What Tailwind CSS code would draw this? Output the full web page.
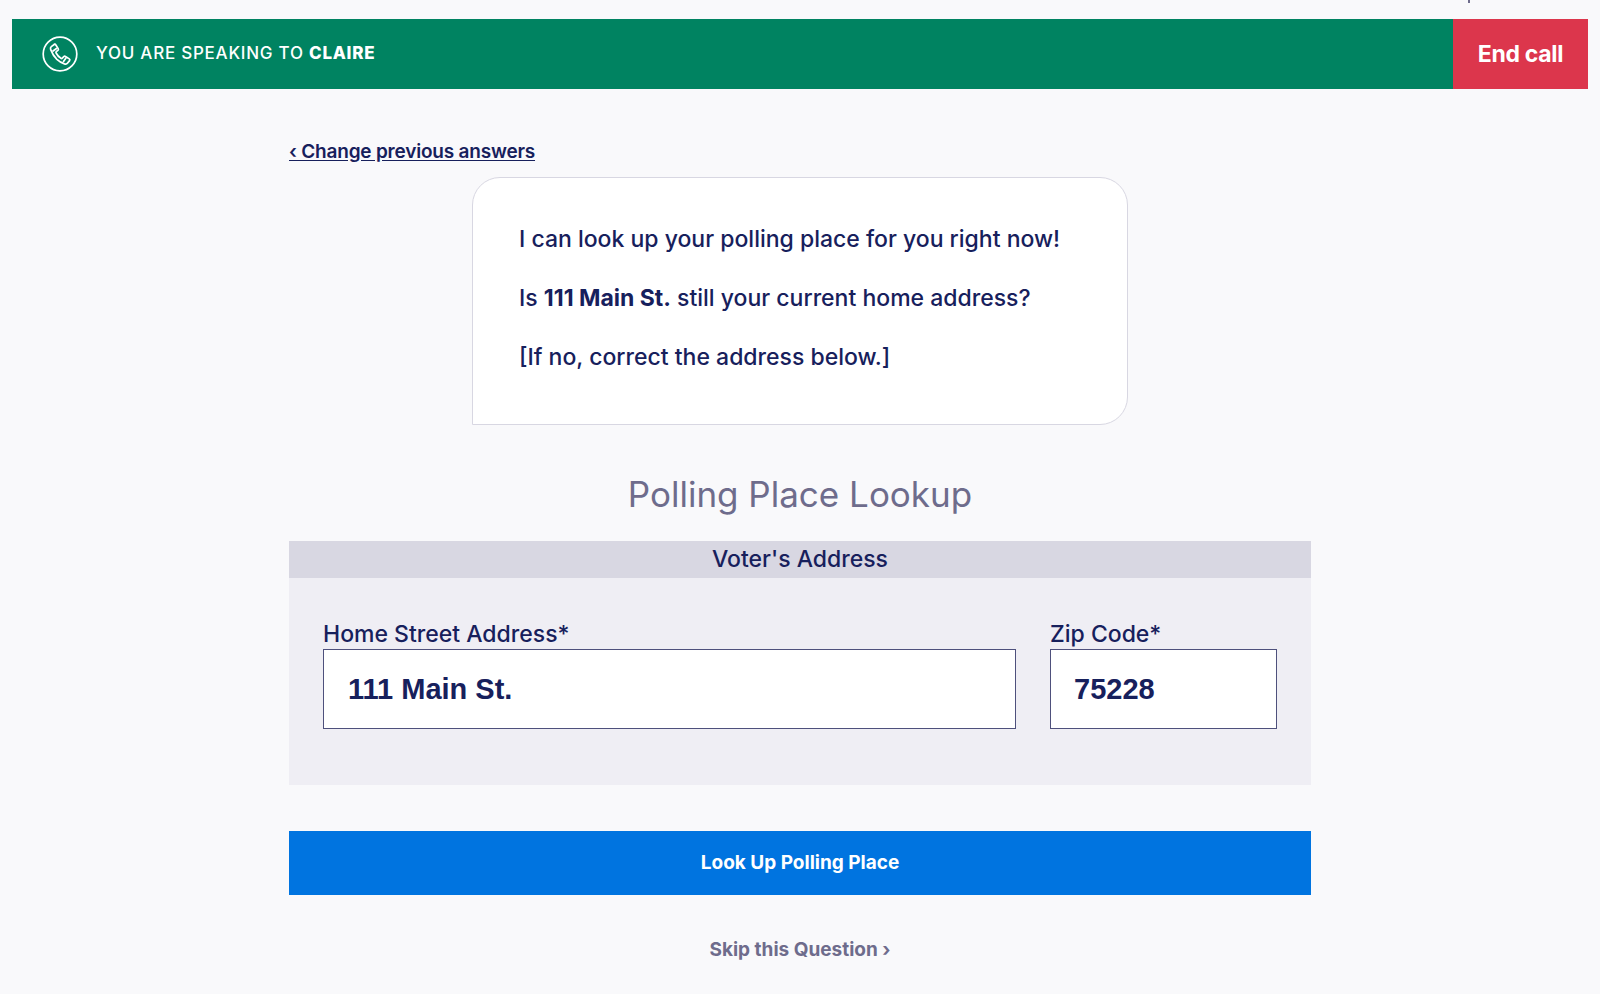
<!DOCTYPE html>
<html lang="en">
<head>
  <meta charset="UTF-8" />
  <title>Polling Place Lookup</title>
  <meta name="viewport" content="width=device-width, initial-scale=1.0" />
  <script src="https://cdn.jsdelivr.net/npm/@tailwindcss/browser@4"></script>
</head>
<body class="h-[994px] overflow-hidden bg-[#f9f9fb] text-[#17205c] font-['Inter',sans-serif]">

  <!-- Call bar -->
  <div class="h-[19px] pl-[1468px]"><div class="w-[2px] h-[3px] bg-[#6e6c8c]"></div></div>
  <div class="mx-[12px] h-[70px] flex bg-[#008361]">
    <div class="flex-1 flex items-center pl-[30px] text-white">
      <svg class="w-[36px] h-[36px] mr-[18px]" viewBox="0 0 36 36" fill="none" stroke="currentColor" stroke-width="1.7" stroke-linejoin="round" stroke-linecap="round">
        <circle cx="18" cy="18" r="16.8" />
        <path d="M12.6 8.2 9.3 10.6c-.9.7-1 1.9-.6 3 1.6 4.2 3.6 7.2 6.2 9.7 2.4 2.2 4.7 3.6 7.6 4.6 1.3.4 2.4.1 3.1-.8l2-2.5c.4-.6.3-1.3-.3-1.7l-3.8-2.4c-.6-.4-1.2-.3-1.7.2l-1.5 1.5c-.4.4-.9.4-1.4.1-1.7-1-3.7-3.2-4.8-5.3-.3-.5-.2-1 .2-1.4l1.6-1.3c.5-.5.7-1.1.3-1.7l-2.5-3.9c-.4-.6-1.1-.7-1.7-.3Z" />
        <path d="M14.5 12.5 11 15M24 22l-2.5 3.4" />
      </svg>
      <div class="text-[17px] font-medium tracking-[0.75px]">YOU ARE SPEAKING TO <b class="font-extrabold">CLAIRE</b></div>
    </div>
    <button class="w-[135px] bg-[#dc364c] text-white text-[23px] font-bold tracking-[-0.3px]">End call</button>
  </div>

  <main class="w-[1022px] mx-auto">
    <div class="mt-[50px] h-[27px] flex items-center">
      <a href="#" class="text-[19px] font-semibold underline underline-offset-2 tracking-[-0.2px]">‹ Change previous answers</a>
    </div>

    <!-- Script bubble -->
    <div class="mt-[11px] mx-auto w-[656px] h-[248px] bg-white border border-[#d8d7e2] rounded-tl-[28px] rounded-tr-[28px] rounded-br-[28px] pl-[46px] pt-[44px] text-[23px] font-medium">
      <p class="h-[59px]">I can look up your polling place for you right now!</p>
      <p class="h-[59px]">Is <b class="font-bold">111 Main St.</b> still your current home address?</p>
      <p>[If no, correct the address below.]</p>
    </div>

    <h1 class="mt-[44px] h-[50px] flex items-center justify-center text-[35px] text-[#6e6c8c]">Polling Place Lookup</h1>

    <!-- Address form -->
    <section class="mt-[22px] bg-[#efeef4]">
      <div class="h-[37px] bg-[#d8d7e2] flex items-center justify-center text-[23px] font-medium">Voter's Address</div>
      <div class="h-[207px] px-[34px] pt-[39px] flex gap-[34px]">
        <label class="flex-1">
          <div class="h-[32px] text-[23px] font-medium">Home Street Address*</div>
          <input value="111 Main St." class="w-full h-[80px] px-[24px] bg-white border border-[#4e507c] font-['Liberation_Sans',sans-serif] text-[29px] font-bold text-[#17205c]" />
        </label>
        <label class="w-[227px]">
          <div class="h-[32px] text-[23px] font-medium">Zip Code*</div>
          <input value="75228" class="w-full h-[80px] px-[23px] bg-white border border-[#4e507c] font-['Liberation_Sans',sans-serif] text-[29px] font-bold text-[#17205c]" />
        </label>
      </div>
    </section>

    <button class="mt-[46px] w-full h-[64px] bg-[#0074e0] text-white text-[19px] font-bold">Look Up Polling Place</button>

    <div class="mt-[41px] text-center text-[19px] font-bold text-[#6e6c8c]">Skip this Question ›</div>
  </main>
</body>
</html>
